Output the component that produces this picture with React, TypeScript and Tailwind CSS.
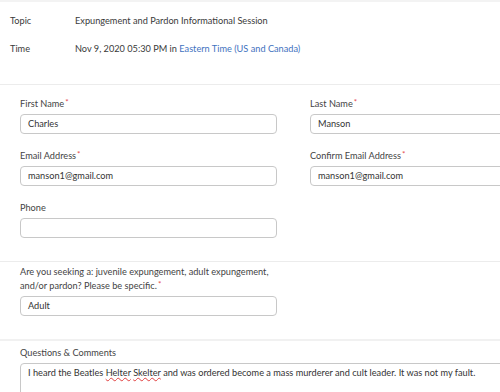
import React from "react";

const font = { fontFamily: "Lato, 'Open Sans', sans-serif" };

function Req() {
  return (
    <span className="inline-block h-[9px] leading-[9px] text-[8px] text-[#e5484d] ml-[1px] relative -top-[2px]">
      *
    </span>
  );
}

function Field({ label, value, req }: { label: string; value: string; req?: boolean }) {
  return (
    <div className="flex flex-col">
      <div className="h-[14px] leading-[14px] text-[9.2px] text-[#444]">
        {label}
        {req && <Req />}
      </div>
      <div className="mt-[3px] h-[20px] w-[257px] rounded-[4px] border border-[#c8c8c8] bg-white px-[7px] flex items-center text-[9.2px] text-[#333]">
        {value}
      </div>
    </div>
  );
}

export default function App() {
  return (
    <div className="w-[500px] h-[392px] overflow-hidden bg-white" style={font}>
      <div className="h-[2px] bg-[#f3f3f3]" />
      <div className="h-[82px] pt-[12px] text-[9.2px] text-[#3a3a3a]">
        <div className="flex h-[14px] leading-[14px] items-center">
          <div className="w-[75px] pl-[10px]">Topic</div>
          <div>Expungement and Pardon Informational Session</div>
        </div>
        <div className="flex h-[14px] leading-[14px] items-center mt-[14px]">
          <div className="w-[75px] pl-[10px]">Time</div>
          <div>
            Nov 9, 2020 05:30 PM in <span className="text-[#3f72c0]">Eastern Time (US and Canada)</span>
          </div>
        </div>
      </div>
      <div className="h-[1px] bg-[#ececec]" />
      <div className="pl-[20px] pt-[12px] pb-[23px]">
        <div className="grid grid-cols-[257px_257px] gap-x-[33px] gap-y-[15px]">
          <Field label="First Name" value="Charles" req />
          <Field label="Last Name" value="Manson" req />
          <Field label="Email Address" value="manson1@gmail.com" req />
          <Field label="Confirm Email Address" value="manson1@gmail.com" req />
          <Field label="Phone" value="" />
        </div>
      </div>
      <div className="h-[1px] bg-[#ececec]" />
      <div className="pl-[20px] pt-[3px] pb-[23px]">
        <div className="w-[265px] text-[9.2px] leading-[14px] text-[#444]">
          <div>Are you seeking a: juvenile expungement, adult expungement,</div>
          <div>
            and/or pardon? Please be specific.
            <Req />
          </div>
        </div>
        <div className="mt-[3px] h-[20px] w-[257px] rounded-[4px] border border-[#c8c8c8] px-[7px] flex items-center text-[9.2px] text-[#333]">
          Adult
        </div>
      </div>
      <div className="h-[2px] bg-[#f1f1f1]" />
      <div className="pl-[20px] pt-[5px]">
        <div className="h-[14px] leading-[14px] text-[9.2px] text-[#444]">Questions &amp; Comments</div>
        <div className="mt-[3px] h-[40px] w-[600px] rounded-[4px] border border-[#c8c8c8] px-[7px] pt-[2px] text-[9.2px] text-[#333]">
          I heard the Beatles{" "}
          <span className="underline decoration-wavy decoration-[#e04040] decoration-[1px]">Helter</span>{" "}
          <span className="underline decoration-wavy decoration-[#e04040] decoration-[1px]">Skelter</span> and was
          ordered become a mass murderer and cult leader. It was not my fault.
        </div>
      </div>
    </div>
  );
}
